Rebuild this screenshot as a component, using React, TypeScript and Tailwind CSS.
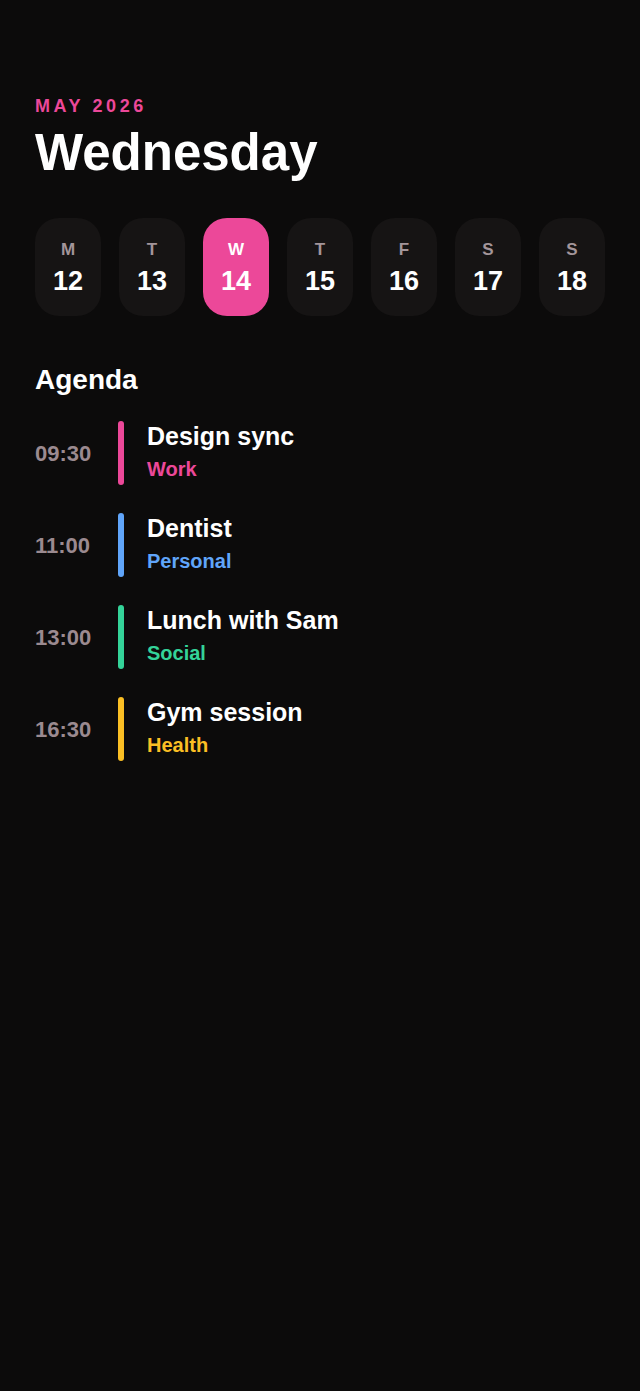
import React from 'react';

const days = [
  { d: 'M', n: 12 },
  { d: 'T', n: 13 },
  { d: 'W', n: 14, active: true },
  { d: 'T', n: 15 },
  { d: 'F', n: 16 },
  { d: 'S', n: 17 },
  { d: 'S', n: 18 },
];

const events = [
  { time: '09:30', title: 'Design sync', tag: 'Work', bar: 'bg-[#ec4899]', text: 'text-[#ec4899]' },
  { time: '11:00', title: 'Dentist', tag: 'Personal', bar: 'bg-[#60a5fa]', text: 'text-[#60a5fa]' },
  { time: '13:00', title: 'Lunch with Sam', tag: 'Social', bar: 'bg-[#34d399]', text: 'text-[#34d399]' },
  { time: '16:30', title: 'Gym session', tag: 'Health', bar: 'bg-[#fbbf24]', text: 'text-[#fbbf24]' },
];

export default function App() {
  return (
    <div
      className="min-h-[1391px] w-[640px] bg-[#0c0b0b] text-white px-[35px] pt-[95px]"
      style={{ fontFamily: '"Liberation Sans", Arial, sans-serif' }}
    >
      <div className="text-[18px] leading-[22px] font-bold tracking-[0.2em] text-[#ec4899]">MAY 2026</div>
      <h1 className="mt-[6px] text-[51px] leading-[60px] font-bold">Wednesday</h1>

      <div className="mt-[35px] flex justify-between">
        {days.map((day, i) => (
          <div
            key={i}
            className={`w-[66px] h-[98px] rounded-[24px] flex flex-col items-center justify-center ${
              day.active ? 'bg-[#ec4899]' : 'bg-[#161414]'
            }`}
          >
            <span className={`mt-[2px] text-[17px] leading-[20px] font-bold ${day.active ? 'text-white' : 'text-[#a3959a]'}`}>
              {day.d}
            </span>
            <span className="mt-[5px] text-[27px] leading-[32px] font-bold text-white">{day.n}</span>
          </div>
        ))}
      </div>

      <h2 className="mt-[47px] text-[28px] leading-[34px] font-bold">Agenda</h2>

      <div className="mt-[24px] flex flex-col gap-[28px]">
        {events.map((e) => (
          <div key={e.time} className="flex items-center">
            <span className="w-[83px] text-[22px] font-bold text-[#9b8a90]">{e.time}</span>
            <div className={`w-[6px] h-[64px] rounded-full ${e.bar}`} />
            <div className="ml-[23px] pb-[4px] flex flex-col">
              <span className="text-[25px] leading-[30px] font-bold text-white">{e.title}</span>
              <span className={`mt-[6px] text-[20px] leading-[24px] font-bold ${e.text}`}>{e.tag}</span>
            </div>
          </div>
        ))}
      </div>
    </div>
  );
}
